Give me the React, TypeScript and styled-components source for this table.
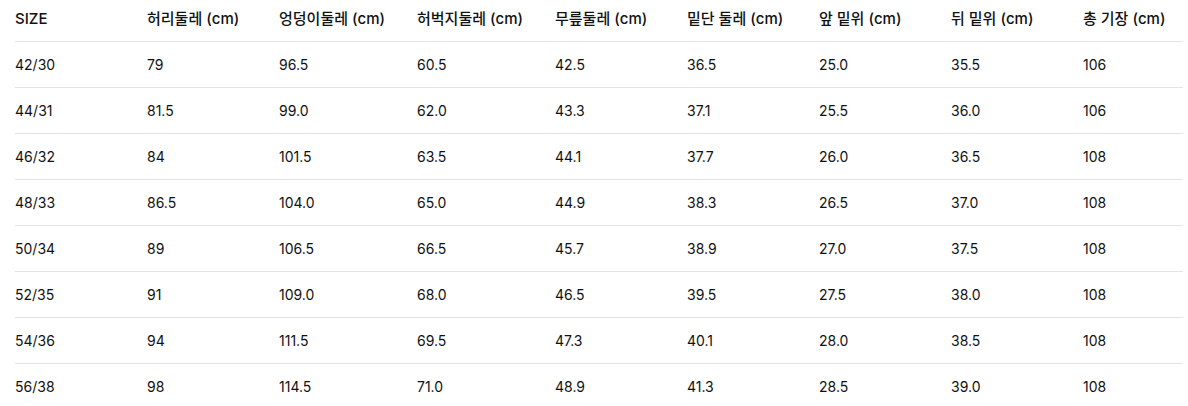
import React from "react";
import styled, { createGlobalStyle } from "styled-components";

const GlobalStyle = createGlobalStyle`
  body {
    margin: 0;
    background: #ffffff;
    font-family: Inter, "Noto Sans CJK KR", sans-serif;
    color: #111111;
  }
`;

const Wrapper = styled.div`
  padding: 0 5px 0 15px;
`;

const Table = styled.table`
  width: 1168px;
  border-collapse: collapse;
  table-layout: fixed;
  font-size: 14px;
`;

const HeadCell = styled.th<{ $w: number }>`
  width: ${({ $w }) => $w}px;
  padding: 9px 0 12px;
  line-height: 20px;
  font-size: 15px;
  text-align: left;
  font-weight: 500;
  white-space: nowrap;
  border-bottom: 1px solid #e3e3e3;
`;

const Row = styled.tr`
  border-bottom: 1px solid #e3e3e3;

  &:last-child {
    border-bottom: none;
  }
`;

const Cell = styled.td`
  padding: 12px 0;
  line-height: 21px;
  font-weight: 400;
`;

const columns = [
  { label: "SIZE", width: 132 },
  { label: "허리둘레 (cm)", width: 132 },
  { label: "엉덩이둘레 (cm)", width: 138 },
  { label: "허벅지둘레 (cm)", width: 138 },
  { label: "무릎둘레 (cm)", width: 132 },
  { label: "밑단 둘레 (cm)", width: 132 },
  { label: "앞 밑위 (cm)", width: 132 },
  { label: "뒤 밑위 (cm)", width: 132 },
  { label: "총 기장 (cm)", width: 100 },
];

const rows = [
  ["42/30", "79", "96.5", "60.5", "42.5", "36.5", "25.0", "35.5", "106"],
  ["44/31", "81.5", "99.0", "62.0", "43.3", "37.1", "25.5", "36.0", "106"],
  ["46/32", "84", "101.5", "63.5", "44.1", "37.7", "26.0", "36.5", "108"],
  ["48/33", "86.5", "104.0", "65.0", "44.9", "38.3", "26.5", "37.0", "108"],
  ["50/34", "89", "106.5", "66.5", "45.7", "38.9", "27.0", "37.5", "108"],
  ["52/35", "91", "109.0", "68.0", "46.5", "39.5", "27.5", "38.0", "108"],
  ["54/36", "94", "111.5", "69.5", "47.3", "40.1", "28.0", "38.5", "108"],
  ["56/38", "98", "114.5", "71.0", "48.9", "41.3", "28.5", "39.0", "108"],
];

export default function App() {
  return (
    <>
      <GlobalStyle />
      <Wrapper>
        <Table>
          <thead>
            <tr>
              {columns.map((c) => (
                <HeadCell key={c.label} $w={c.width}>
                  {c.label}
                </HeadCell>
              ))}
            </tr>
          </thead>
          <tbody>
            {rows.map((r) => (
              <Row key={r[0]}>
                {r.map((v, i) => (
                  <Cell key={i}>{v}</Cell>
                ))}
              </Row>
            ))}
          </tbody>
        </Table>
      </Wrapper>
    </>
  );
}
